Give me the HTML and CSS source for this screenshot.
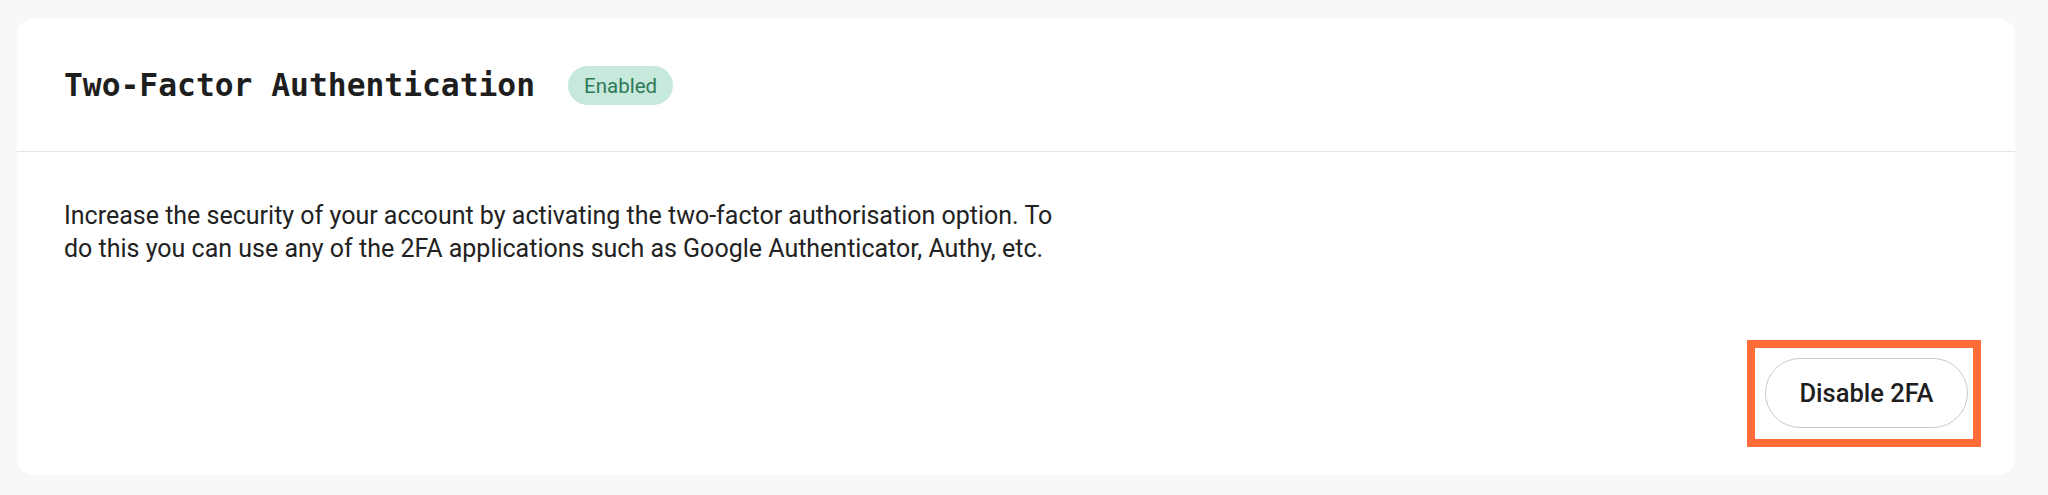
FILE: index.html
```html
<!DOCTYPE html>
<html lang="en">
<head>
    <meta charset="UTF-8">
    <meta name="viewport" content="width=device-width, initial-scale=1.0">
    <title>Two-Factor Authentication</title>
    <link rel="stylesheet" href="styles.css">
</head>
<body>
    <section class="card">
        <header class="card-header">
            <h2>Two-Factor Authentication</h2>
            <span class="badge">Enabled</span>
        </header>
        <div class="card-body">
            <p class="description">Increase the security of your account by activating the two-factor authorisation option. To do this you can use any of the 2FA applications such as Google Authenticator, Authy, etc.</p>
            <div class="actions">
                <span class="highlight">
                    <button type="button" class="outline-btn">Disable 2FA</button>
                </span>
            </div>
        </div>
    </section>
</body>
</html>
```

FILE: styles.css
```css
body {
    font-family: Roboto, "Noto Sans", sans-serif;
    margin: 0;
    padding: 19px 33px 21px 17px;
    background-color: #f7f8fa;
    color: #222;
}

.card {
    background: white;
    border-radius: 16px;
}

.card-header {
    display: flex;
    align-items: center;
    gap: 33px;
    padding: 47px 47px 46px;
    border-bottom: 1px solid #e2e6e4;
}

.card-header h2 {
    margin: 0;
    font-family: "DejaVu Sans Mono", "Liberation Mono", monospace;
    font-size: 31.3px;
    font-weight: bold;
    line-height: 1.2;
    color: #1e1e1e;
}

.badge {
    display: inline-flex;
    align-items: center;
    height: 39px;
    padding: 0 16px;
    border-radius: 20px;
    background-color: #c6e9dc;
    color: #2e7a58;
    font-size: 20.5px;
}

.card-body {
    padding: 47px 47px 47px 47px;
}

.description {
    margin: 0;
    max-width: 1012px;
    font-size: 25px;
    line-height: 33px;
    color: #222;
}

.actions {
    display: flex;
    justify-content: flex-end;
    margin-top: 93px;
}

.highlight {
    position: relative;
    display: inline-block;
}

.highlight::after {
    content: "";
    position: absolute;
    top: -18px;
    left: -18px;
    right: -13px;
    bottom: -19px;
    border: 8px solid #ff6c37;
    pointer-events: none;
}

.outline-btn {
    display: block;
    width: 203px;
    height: 70px;
    border: 1px solid #c4cad2;
    border-radius: 35px;
    background: white;
    font-family: Roboto, "Noto Sans", sans-serif;
    font-size: 25.5px;
    font-weight: 500;
    color: #1e1e1e;
    cursor: pointer;
}
```
